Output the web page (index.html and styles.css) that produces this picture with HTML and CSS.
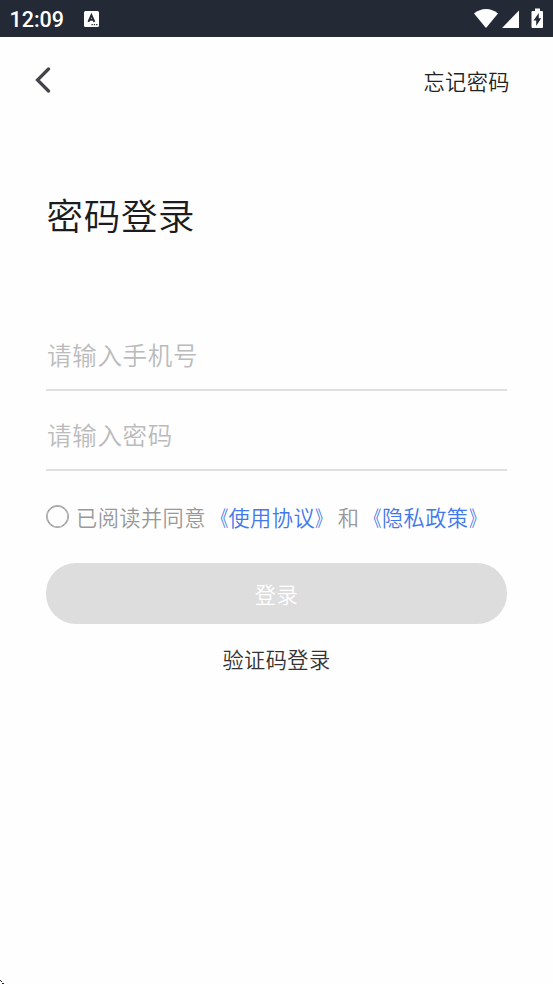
FILE: index.html
```html
<!DOCTYPE html>
<html lang="zh-CN">
<head>
<meta charset="utf-8">
<title>密码登录</title>
<link rel="stylesheet" href="styles.css">
</head>
<body>
<header class="status">
  <span class="time">12:09</span>
  <svg class="ime" width="15" height="16" viewBox="0 0 15 16"><rect width="15" height="16" rx="1.5" fill="#fff"/><path d="M4.400 10.800 7.400 4l3 6.800M5.600 8.700h3.600" fill="none" stroke="#232a36" stroke-width="1.900"/><path d="M7.500 13.700h1.300M9.800 13.700h1.300M12.100 13.700h1.300" stroke="#232a36" stroke-width="1.200"/></svg>
  <svg class="signals" width="72" height="22" viewBox="0 0 72 22"><path d="M0 5.500C7-.5 17-.5 24 5.500L12 20Z" fill="#fff"/><path d="M28 20 45 2.500V20Z" fill="#fff"/><path d="M61 .5h5V3h2q1 0 1 1v15q0 1-1 1H58.500q-1 0-1-1V4q0-1 1-1H61Z" fill="#fff"/><path d="M64.800 5v5.200h2.400L62.200 18v-5.600h-2.700Z" fill="#232a36"/></svg>
</header>
<nav class="nav">
  <svg width="16" height="26" viewBox="0 0 16 26"><path d="M13.500 2 2.500 13 13.500 24" fill="none" stroke="#45434a" stroke-width="3.200" stroke-linecap="round" stroke-linejoin="miter"/></svg>
  <a class="forgot">忘记密码</a>
</nav>
<main class="main">
  <h1 class="title">密码登录</h1>
  <div class="field">请输入手机号</div>
  <div class="field">请输入密码</div>
  <div class="agree"><span class="radio"></span><span class="terms">已阅读并同意<a><span class="open">《</span>使用协议<span class="close">》</span></a>和<a><span class="open">《</span>隐私政策<span class="close">》</span></a></span></div>
  <div class="submit">登录</div>
  <a class="alternate">验证码登录</a>
</main>
<svg class="corner" width="4" height="4" viewBox="0 0 4 4"><path d="M0 0h1v1H0zM1 1h1v1H1zM2 3h2v1H2z" fill="#222"/></svg>
</body>
</html>
```
FILE: styles.css
```css
* { box-sizing: border-box; }
body {
  margin: 0;
  height: 984px;
  overflow: hidden;
  background: #fefefe;
  font-family: "Noto Sans CJK SC", sans-serif;
  font-size: 21.200px;
  letter-spacing: .45px;
  font-weight: 350;
  position: relative;
}
.status {
  height: 37px;
  background: #232a36;
  color: #fff;
  display: flex;
  align-items: center;
  padding: 0 9px 0 9.500px;
}
.time { font: 500 21.500px/37px Roboto, sans-serif; letter-spacing: 0; width: 74.500px; padding-top: 1px; }
.signals { margin-left: auto; margin-right: -2px; }
.nav {
  height: 86px;
  display: flex;
  align-items: center;
  justify-content: space-between;
  padding: 0 43px 0 35px;
}
.forgot { color: #222; line-height: 32px; padding-top: 1px; }
.main { padding: 64px 46px 0; }
.title {
  margin: 0 0 75px;
  font-size: 36.500px;
  letter-spacing: .7px;
  font-weight: 350;
  line-height: 54px;
  padding: 1px 0 0 .5px;
  height: 54px;
  color: #1c1c20;
}
.field {
  height: 80px;
  border-bottom: 2px solid #dfdfdf;
  padding: 19px 0 0 1px;
  font-size: 24.500px;
  letter-spacing: .7px;
  line-height: 50px;
  color: #bbb;
}
.title + .field { height: 75px; padding-top: 14px; }
.agree { display: flex; align-items: center; height: 92px; color: #999; }
.radio {
  width: 23px;
  height: 23px;
  border: 1.5px solid #999;
  box-shadow: inset 0 0 0 .7px #999;
  border-radius: 50%;
  margin: 0 7px 1px 0;
}
.terms { white-space: nowrap; padding-bottom: 2px; text-spacing-trim: space-all; }
.terms a { color: #4277ed; margin: 0 1px; }
.open, .close { display: inline-block; }
.open { transform: scaleX(.76); transform-origin: right; }
.close { transform: scaleX(.76); transform-origin: left; }
.submit {
  height: 61px;
  border-radius: 30px;
  background: #ddd;
  color: #fff;
  line-height: 62px;
  text-align: center;
}
.alternate { display: block; text-align: center; line-height: 70px; color: #333; }
.corner { position: absolute; left: 0; bottom: 0; }
```
